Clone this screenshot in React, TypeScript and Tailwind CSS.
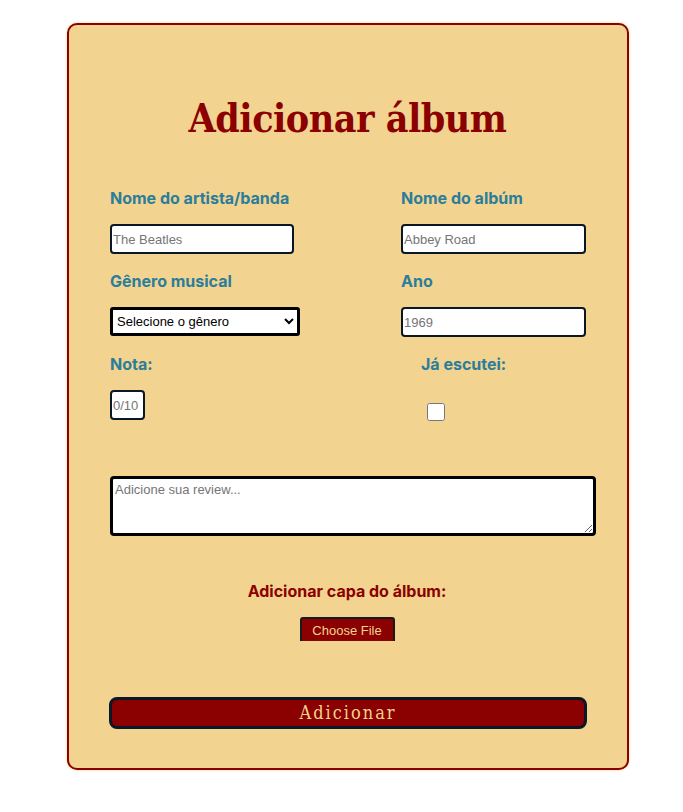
export default function App() {
  const label = "block text-[16px] leading-[24px] font-bold text-[#2b7d9b] font-['Inter',sans-serif]"
  const input =
    "block h-[30px] border-2 border-[#0a1726] rounded-[4px] bg-white px-[1px] text-[13px] font-['Liberation_Sans',Arial,sans-serif] placeholder:text-[#757575] outline-none"

  return (
    <div className="min-h-[812px] bg-white pt-[23px] pl-[67px]">
      <div className="w-[562px] border-2 border-[#8b0000] rounded-[10px] bg-[#f2d38f] shadow-[0_0_3px_#f2d38f] pl-[41px] pr-[31px] pb-[39px]">
        <h1 className="mt-[69px] pr-[11px] text-center text-[39px] leading-[48px] font-bold text-[#8b0000] font-['DejaVu_Serif_Condensed','DejaVu_Serif',serif] tracking-[-0.5px]">
          Adicionar álbum
        </h1>

        <div className="mt-[44px] flex">
          <div className="w-[291px]">
            <label className={label}>Nome do artista/banda</label>
            <input className={`${input} mt-[14px] w-[184px]`} placeholder="The Beatles" />
            <label className={`${label} mt-[15px]`}>Gênero musical</label>
            <select className="mt-[14px] block h-[29px] w-[190px] border-[3px] border-black rounded-[3px] bg-white px-0 text-[13px] text-black font-['Liberation_Sans',Arial,sans-serif]">
              <option>Selecione o gênero</option>
            </select>
          </div>
          <div>
            <label className={label}>Nome do albúm</label>
            <input className={`${input} mt-[14px] w-[185px]`} placeholder="Abbey Road" />
            <label className={`${label} mt-[15px]`}>Ano</label>
            <input className={`${input} mt-[14px] w-[185px]`} placeholder="1969" />
          </div>
        </div>

        <div className="mt-[15px] flex">
          <div className="w-[311px]">
            <label className={label}>Nota:</label>
            <input className={`${input} mt-[14px] w-[35px]`} placeholder="0/10" />
          </div>
          <div>
            <label className={label}>Já escutei:</label>
            <input type="checkbox" className="mt-[27px] ml-[6px] block w-[18px] h-[18px]" />
          </div>
        </div>

        <textarea
          className="mt-[55px] block h-[60px] w-[486px] border-[3px] border-black rounded-[4px] bg-white px-[2px] py-[1px] text-[13px] font-['Liberation_Sans',Arial,sans-serif] placeholder:text-[#757575] outline-none"
          placeholder="Adicione sua review..."
        />

        <p className="mt-[43px] text-center text-[16px] leading-[24px] font-bold text-[#8b0000] font-['Inter',sans-serif] pr-[12px]">
          Adicionar capa do álbum:
        </p>

        <div className="mt-[14px] flex justify-center pr-[12px]">
          <div className="h-[24px] w-[95px] overflow-hidden">
            <div className="h-[30px] border-2 border-[#1a1a1a] rounded-[3px] bg-[#8b0000] text-center text-[13px] leading-[24px] text-[#f2d38f] font-['Liberation_Sans',Arial,sans-serif]">
              Choose File
            </div>
          </div>
        </div>

        <button className="mt-[56px] block h-[32px] w-[478px] -ml-[1px] border-[3px] border-[#0a1726] rounded-[8px] bg-[#8b0000] text-[18px] leading-[24px] tracking-[2px] text-[#f2d38f] font-['DejaVu_Serif_Condensed','DejaVu_Serif',serif]">
          Adicionar
        </button>
      </div>
    </div>
  )
}
